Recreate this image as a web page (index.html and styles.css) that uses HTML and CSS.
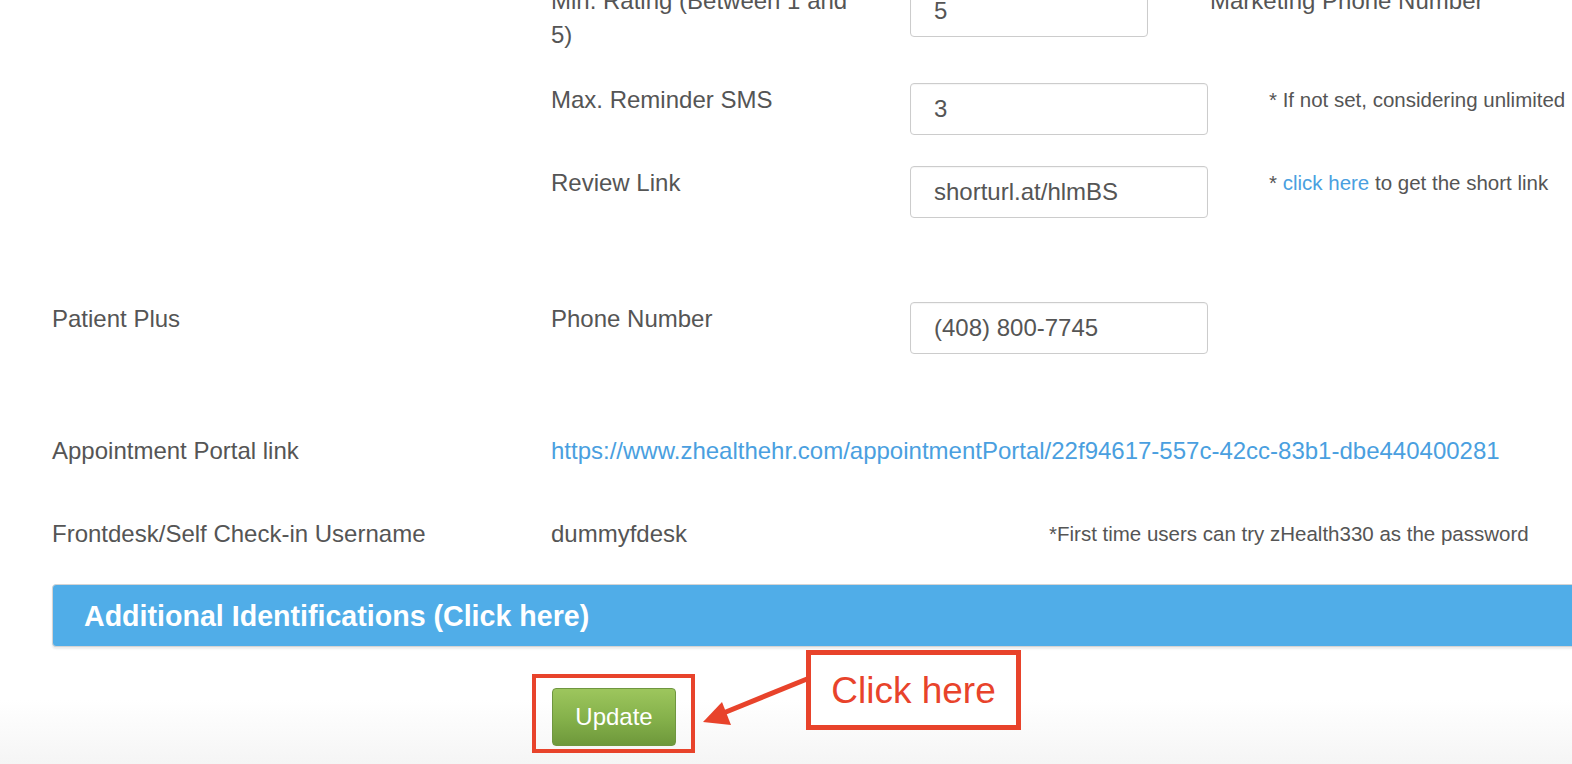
FILE: index.html
```html
<!DOCTYPE html>
<html lang="en">
<head>
    <meta charset="UTF-8">
    <meta name="viewport" content="width=device-width, initial-scale=1.0">
    <title>Practice Settings</title>
    <link rel="stylesheet" href="styles.css">
</head>
<body>
    <div class="page">
        <div class="form-row">
            <div class="section-label"></div>
            <div class="field-label">Min. Rating (Between 1 and 5)</div>
            <input class="form-input input-short" type="text" value="5">
            <div class="side-label">Marketing Phone Number</div>
        </div>

        <div class="form-row">
            <div class="section-label"></div>
            <div class="field-label">Max. Reminder SMS</div>
            <input class="form-input" type="text" value="3">
            <div class="note">* If not set, considering unlimited</div>
        </div>

        <div class="form-row section-end">
            <div class="section-label"></div>
            <div class="field-label">Review Link</div>
            <input class="form-input" type="text" value="shorturl.at/hlmBS">
            <div class="note">* <a href="#" class="link">click here</a> to get the short link</div>
        </div>

        <div class="form-row patient-row">
            <div class="section-label">Patient Plus</div>
            <div class="field-label">Phone Number</div>
            <input class="form-input" type="text" value="(408) 800-7745">
        </div>

        <div class="form-row portal-row">
            <div class="section-label">Appointment Portal link</div>
            <a href="#" class="link">https://www.zhealthehr.com/appointmentPortal/22f94617-557c-42cc-83b1-dbe440400281</a>
        </div>

        <div class="form-row frontdesk-row">
            <div class="section-label">Frontdesk/Self Check-in Username</div>
            <div class="value">dummyfdesk</div>
            <div class="note password-note">*First time users can try zHealth330 as the password</div>
        </div>

        <div class="panel-bar">Additional Identifications (Click here)</div>

        <div class="actions">
            <button class="update-btn">Update</button>
        </div>
    </div>

    <!-- annotation overlays -->
    <div class="mark-box"></div>
    <svg class="mark-arrow" width="120" height="60" viewBox="0 0 120 60">
        <line x1="112" y1="9" x2="26" y2="44" stroke="#e8432b" stroke-width="5"/>
        <polygon points="8,52 27,32 36,55" fill="#e8432b"/>
    </svg>
    <div class="callout">Click here</div>
</body>
</html>
```

FILE: styles.css
```css
* {
    margin: 0;
    padding: 0;
    box-sizing: border-box;
}

html {
    min-height: 100%;
    background: linear-gradient(to bottom, #fff 0, #fff 700px, #f5f5f5 764px) no-repeat;
}

body {
    font-family: 'Liberation Sans', Arial, Helvetica, sans-serif;
    color: #555;
    font-size: 24px;
    line-height: 34px;
    overflow: hidden;
    height: 764px;
}

.page {
    width: 1620px;
    margin-top: -16px;
    padding-left: 52px;
}

.form-row {
    display: flex;
    align-items: flex-start;
    margin-bottom: 31px;
}

.section-end {
    margin-bottom: 84px;
}

.patient-row {
    margin-bottom: 80px;
}

.portal-row {
    margin-bottom: 49px;
}

.frontdesk-row {
    margin-bottom: 33px;
}

.section-label {
    width: 499px;
    flex-shrink: 0;
}

.field-label {
    width: 359px;
    flex-shrink: 0;
    padding-right: 50px;
}

.value {
    width: 498px;
    flex-shrink: 0;
}

.side-label {
    margin-left: 62px;
}

.form-input {
    width: 298px;
    height: 52px;
    padding: 0 23px;
    border: 1px solid #ccc;
    border-radius: 4px;
    font-family: inherit;
    font-size: 24px;
    color: #555;
    background: #fff;
    box-shadow: inset 0 1px 1px rgba(0,0,0,0.04);
}

.input-short {
    width: 238px;
    height: 53px;
}

.note {
    margin-left: 61px;
    font-size: 20.5px;
}

.password-note {
    margin-left: 0;
}

.link {
    color: #4a9fe0;
    text-decoration: none;
}

.panel-bar {
    height: 63px;
    line-height: 63px;
    padding-left: 31px;
    background: #50ade8;
    border: 1px solid #d4d4d4;
    border-radius: 4px;
    box-shadow: 0 2px 2px rgba(0,0,0,0.08);
    color: #fff;
    font-size: 28.6px;
    font-weight: bold;
}

.actions {
    margin-top: 41px;
    padding-left: 500px;
}

.update-btn {
    width: 124px;
    height: 58px;
    font-family: inherit;
    font-size: 24px;
    color: #fff;
    background: linear-gradient(to bottom, #9dc65d 0%, #84b04a 55%, #6e983b 100%);
    border: 1px solid #6f9640;
    border-radius: 4px;
    cursor: pointer;
}

.mark-box {
    position: absolute;
    left: 532px;
    top: 674px;
    width: 163px;
    height: 79px;
    border: 4px solid #e8432b;
}

.mark-arrow {
    position: absolute;
    left: 695px;
    top: 670px;
}

.callout {
    position: absolute;
    left: 806px;
    top: 650px;
    width: 215px;
    height: 80px;
    border: 5px solid #e8432b;
    background: #fff;
    color: #e8432b;
    font-size: 37px;
    line-height: 1;
    display: flex;
    align-items: center;
    justify-content: center;
}
```
